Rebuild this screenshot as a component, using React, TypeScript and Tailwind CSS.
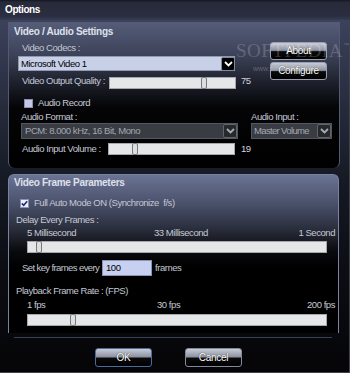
import React from "react";

const Chevron = ({ color }: { color: string }) => (
  <svg width="9" height="6" viewBox="0 0 9 6">
    <path d="M1 1 L4.5 4.5 L8 1" fill="none" stroke={color} strokeWidth="1.8" />
  </svg>
);

const Slider = ({ w, thumb }: { w: number; thumb: number }) => (
  <div
    className="relative h-[12px] bg-[#e4e6e8] border border-[#a4a8ae] shrink-0"
    style={{ width: w }}
  >
    <div
      className="absolute top-[-1px] w-[6px] h-[12px] rounded-[2px] bg-[#dcdee0] border border-[#767a80]"
      style={{ left: thumb }}
    />
  </div>
);

const GlassButton = ({ label, border, w, h }: { label: string; border: string; w: number; h: number }) => (
  <div
    className={`flex items-center justify-center rounded-[3px] border ${border} bg-[linear-gradient(180deg,#c8ccd4_0%,#8c92a2_46%,#0a0a0c_54%,#000_100%)] text-white text-[10px] tracking-[-0.3px] leading-none [text-shadow:0_0_1px_#000]`}
    style={{ width: w, height: h }}
  >
    {label}
  </div>
);

export default function App() {
  return (
    <div className="relative w-[350px] h-[373px] overflow-hidden whitespace-nowrap bg-black font-['Liberation_Sans',sans-serif] text-[9.5px] tracking-[-0.45px] text-[#c4c8d4]">
      {/* title bar */}
      <div className="h-[20px] flex items-center pl-[5px] pb-[2px] bg-[linear-gradient(180deg,#16181f_0%,#262a3a_12%,#2a2e40_80%,#363c54_100%)]">
        <span className="font-bold text-[10px] tracking-[-0.4px] text-white">Options</span>
      </div>

      {/* body */}
      <div className="h-[353px] flex flex-col bg-[linear-gradient(180deg,#3c425c_0%,#262b3c_25%,#161a24_45%,#0c0e14_70%,#050507_100%)] border-r border-b border-[#3e4250]">
        {/* group 1 */}
        <div className="ml-[8px] mt-[2px] w-[332px] h-[146px] flex flex-col border-t border-l border-r border-[#545a72] rounded-b-[6px] bg-[linear-gradient(180deg,#555c78_0%,#3c4258_22%,#1c1f2a_42%,#050507_58%,#000_100%)]">
          <div className="mt-[2px] pl-[5px] h-[14px] leading-[14px] font-bold text-[10px] tracking-[-0.3px] text-[#dde1ec]">
            Video / Audio Settings
          </div>
          <div className="flex h-[52px]">
            <div className="w-[237px] flex flex-col">
              <div className="mt-[2px] pl-[13px] h-[14px] leading-[14px]">Video Codecs :</div>
              <div className="mt-[1px] ml-[9px] w-[217px] h-[15px] flex items-center bg-[#c8d0e8] border border-[#9098b4]">
                <span className="flex-1 pl-[2px] text-black leading-none">Microsoft Video 1</span>
                <div className="w-[14px] h-[14px] mr-[-1px] flex items-center justify-center bg-black border border-[#8088a0] rounded-[2px]">
                  <Chevron color="#ffffff" />
                </div>
              </div>
              <div className="mt-[3px] flex items-start">
                <span className="pl-[13px] w-[100px] h-[14px] leading-[14px] shrink-0">Video Output Quality :</span>
                <div className="mt-[3px]">
                  <Slider w={127} thumb={91} />
                </div>
                <span className="ml-[5px] h-[14px] leading-[14px] text-[#d0d4dc]">75</span>
              </div>
            </div>
            <div className="ml-[24px] mt-[3px] flex flex-col gap-[2px]">
              <GlassButton label="About" border="border-[#9aa0b2]" w={57} h={18} />
              <GlassButton label="Configure" border="border-[#9aa0b2]" w={57} h={18} />
            </div>
          </div>
          <div className="mt-[5px] h-[14px] flex items-center">
            <div className="ml-[15px] w-[9px] h-[9px] bg-[#c4c8e4] border border-[#8a90b0]" />
            <span className="ml-[5px] leading-[14px]">Audio Record</span>
          </div>
          <div className="flex h-[13px] leading-[14px]">
            <span className="pl-[12px] w-[242px]">Audio Format :</span>
            <span>Audio Input :</span>
          </div>
          <div className="flex">
            <div className="ml-[12px] w-[217px] h-[16px] flex items-center bg-[#3a3c44] border border-[#54575f]">
              <span className="flex-1 pl-[3px] text-[#a4a8b0] leading-none">PCM: 8.000 kHz, 16 Bit, Mono</span>
              <div className="w-[14px] h-[14px] flex items-center justify-center bg-[#26282c] border border-[#60646c] rounded-[2px]">
                <Chevron color="#a8acb4" />
              </div>
            </div>
            <div className="ml-[13px] w-[81px] h-[16px] flex items-center bg-[#3a3c44] border border-[#54575f]">
              <span className="flex-1 pl-[2px] text-[#a4a8b0] leading-none tracking-[-0.65px] overflow-hidden">Master Volume</span>
              <div className="w-[14px] h-[14px] shrink-0 flex items-center justify-center bg-[#26282c] border border-[#60646c] rounded-[2px]">
                <Chevron color="#a8acb4" />
              </div>
            </div>
          </div>
          <div className="mt-[3px] flex items-start">
            <span className="pl-[13px] w-[99px] h-[14px] leading-[14px] shrink-0">Audio Input Volume :</span>
            <div className="mt-[1px]">
              <Slider w={127} thumb={23} />
            </div>
            <span className="ml-[6px] h-[14px] leading-[14px] text-[#d0d4dc]">19</span>
          </div>
        </div>

        {/* group 2 */}
        <div className="ml-[8px] mt-[6px] w-[331px] h-[159px] flex flex-col border-t border-l border-r border-[#7a82a2] rounded-t-[6px] bg-[linear-gradient(180deg,#6b7394_0%,#4e5570_16%,#2a2e3c_34%,#0a0b0e_48%,#000_58%,#000_100%)]">
          <div className="mt-[1px] pl-[5px] h-[14px] leading-[14px] font-bold text-[10px] tracking-[-0.3px] text-[#dde1ec]">
            Video Frame Parameters
          </div>
          <div className="mt-[6px] h-[14px] flex items-center">
            <div className="ml-[11px] w-[9px] h-[9px] flex items-center justify-center bg-[#eef0f8] border border-[#8a90b0]">
              <svg width="7" height="7" viewBox="0 0 7 7">
                <path d="M0.8 3.4 L2.7 5.3 L6.2 1.2" fill="none" stroke="#1a2a8a" strokeWidth="1.6" />
              </svg>
            </div>
            <span className="ml-[5px] leading-[14px]">Full Auto Mode ON (Synchronize&nbsp; f/s)</span>
          </div>
          <div className="mt-[3px] pl-[7px] h-[14px] leading-[14px]">Delay Every Frames :</div>
          <div className="mt-[-1px] pl-[18px] pr-[3px] h-[14px] leading-[14px] flex">
            <span className="w-[127px] shrink-0">5 Millisecond</span>
            <span>33 Millisecond</span>
            <span className="flex-1 text-right">1 Second</span>
          </div>
          <div className="mt-[1px] ml-[18px]">
            <Slider w={300} thumb={8} />
          </div>
          <div className="mt-[7px] h-[16px] flex items-center">
            <span className="pl-[13px] w-[93px] shrink-0 leading-[14px] tracking-[-0.6px]">Set key frames every</span>
            <div className="w-[50px] h-[16px] flex items-center pl-[3px] bg-[#c8d0f0] border border-[#8a92b8] text-black leading-none">100</div>
            <span className="ml-[3px] leading-[14px]">frames</span>
          </div>
          <div className="mt-[8px] pl-[7px] h-[14px] leading-[14px]">Playback Frame Rate : (FPS)</div>
          <div className="pl-[18px] pr-[3px] h-[14px] leading-[14px] flex">
            <span className="w-[130px] shrink-0">1 fps</span>
            <span>30 fps</span>
            <span className="flex-1 text-right">200 fps</span>
          </div>
          <div className="mt-[2px] ml-[18px]">
            <Slider w={300} thumb={42} />
          </div>
        </div>

        {/* separator */}
        <div className="mt-[4px] ml-[14px] w-[318px] h-px bg-[#3a4054]" />

        {/* bottom buttons */}
        <div className="mt-[10px] flex">
          <div className="ml-[95px]">
            <GlassButton label="OK" border="border-[#4a6c9e]" w={57} h={19} />
          </div>
          <div className="ml-[33px]">
            <GlassButton label="Cancel" border="border-[#848a9c]" w={57} h={19} />
          </div>
        </div>
      </div>

      {/* watermark overlay */}
      <div className="pointer-events-none absolute left-[236px] top-[41px] flex flex-col items-start tracking-normal">
        <div className="flex items-start">
          <span className="font-['Liberation_Serif',serif] text-[19px] leading-[20px] tracking-[0.5px] text-white/20">SOFTPEDIA</span>
          <span className="text-[6px] leading-none text-white/25 mt-[1px]">™</span>
        </div>
        <span className="ml-[17px] mt-[4px] text-[7px] leading-none text-white/25">www.softpedia.com</span>
      </div>
    </div>
  );
}
